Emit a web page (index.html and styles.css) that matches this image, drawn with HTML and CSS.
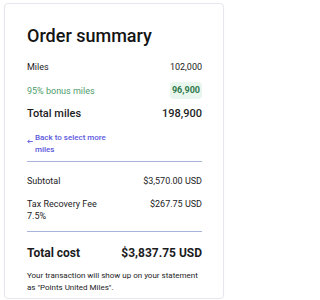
FILE: index.html
```html
<!DOCTYPE html>
<html>
<head>
<meta charset="utf-8">
<link rel="stylesheet" href="styles.css">
</head>
<body>
<div class="card">
  <h1 class="title">Order summary</h1>
  <div class="row row-miles"><span>Miles</span><span>102,000</span></div>
  <div class="row row-bonus"><span class="bonus-label">95% bonus miles</span><span class="pill">96,900</span></div>
  <div class="row row-total"><span>Total miles</span><span>198,900</span></div>
  <a class="back" href="#"><svg class="arrow" width="6" height="5" viewBox="0 0 6 5"><path d="M5.8 2.5H0.8M2.6 0.7L0.8 2.5L2.6 4.3" fill="none" stroke="currentColor" stroke-width="0.9"/></svg><span class="back-text">Back to select more miles</span></a>
  <div class="divider"></div>
  <div class="row row-sub"><span>Subtotal</span><span>$3,570.00 USD</span></div>
  <div class="row row-tax"><span class="tax-label">Tax Recovery Fee<br>7.5%</span><span>$267.75 USD</span></div>
  <div class="divider divider-2"></div>
  <div class="row row-cost"><span>Total cost</span><span>$3,837.75 USD</span></div>
  <p class="note">Your transaction will show up on your statement as "Points United Miles".</p>
</div>
</body>
</html>
```
FILE: styles.css
```css
html, body {
  margin: 0;
  background: #ffffff;
}
body {
  padding: 3px 0 0 4px;
  font-family: Roboto, "Liberation Sans", sans-serif;
  color: #1c1c1e;
}
.card {
  box-sizing: border-box;
  width: 220px;
  border: 1px solid #e6e6ec;
  border-radius: 4px;
  padding: 20px 21px 3px 22px;
  box-shadow: 0 0 2px rgba(0,0,0,0.04);
}
.title {
  margin: 0;
  font-size: 18px;
  line-height: 24px;
  font-weight: 500;
  color: #141414;
}
.row {
  display: flex;
  justify-content: space-between;
  align-items: flex-start;
  font-size: 9px;
  line-height: 14px;
}
.row-miles { margin-top: 12px; }
.row-bonus {
  margin-top: 8px;
  align-items: center;
  height: 17px;
}
.bonus-label { color: #4e9c6c; }
.pill {
  background: #e9f6ed;
  color: #2e7a4b;
  font-weight: 700;
  border-radius: 4px;
  padding: 0 2px;
  line-height: 17px;
}
.row-total {
  margin-top: 7px;
  font-size: 11px;
  line-height: 16px;
  font-weight: 500;
}
.back {
  display: flex;
  align-items: flex-start;
  margin-top: 10px;
  color: #5a57dc;
  text-decoration: none;
  font-size: 8px;
  line-height: 11.5px;
  font-weight: 500;
}
.arrow {
  flex: none;
  margin: 6.5px 2px 0 0;
}
.back-text { width: 74px; }
.divider {
  margin-top: 6px;
  height: 1px;
  background: #a9b4dc;
}
.row-sub { margin-top: 12px; }
.row-tax { margin-top: 10px; line-height: 12px; }
.divider-2 { margin-top: 9px; }
.row-cost {
  margin-top: 13px;
  font-size: 12px;
  line-height: 16px;
  font-weight: 700;
}
.note {
  margin: 9px 0 0;
  font-size: 8px;
  line-height: 12.3px;
}
```
